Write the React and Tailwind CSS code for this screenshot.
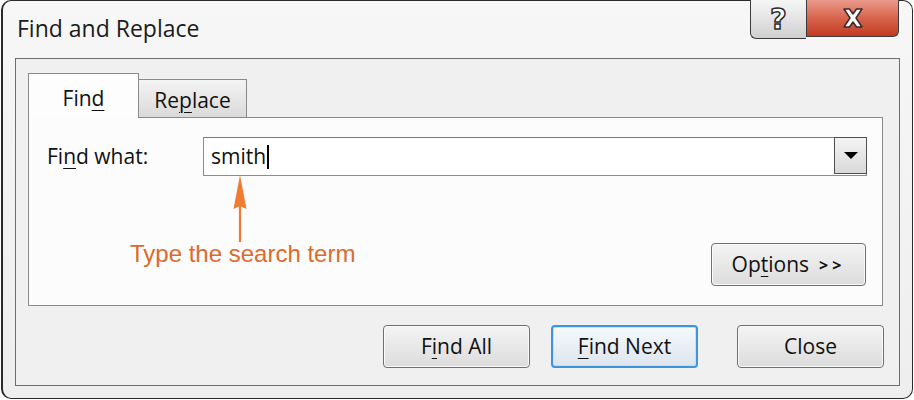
const ui = { fontFamily: '"Open Sans", "Noto Sans", sans-serif' };

function DialogButton({ children, primary = false }) {
  return (
    <button
      className={
        primary
          ? 'flex h-[43px] w-[147px] items-center justify-center rounded-[4px] border-2 border-[#3e95db] bg-gradient-to-b from-[#f5f9fc] to-[#dde5ec] text-[21px] text-[#111] shadow-[inset_0_0_0_1px_#bfe3fb]'
          : 'flex h-[43px] w-[147px] items-center justify-center rounded-[4px] border border-[#6f6f6f] bg-gradient-to-b from-[#f4f4f4] to-[#dcdcdc] text-[21px] text-[#111] shadow-[inset_0_0_0_1px_#fafafa]'
      }
      style={ui}
    >
      {children}
    </button>
  );
}

function U({ children }) {
  return <span className="underline decoration-1 underline-offset-[4px]">{children}</span>;
}

export default function App() {
  return (
    <div className="h-[400px] w-[914px] bg-white" style={ui}>
      <div className="ml-[1px] flex h-[399px] w-[912px] flex-col rounded-[10px] border border-l-2 border-[#2a2a2a] bg-gradient-to-b from-[#f7f7f7] to-[#eeeeee]">
        {/* title bar */}
        <div className="flex h-[57px] items-start justify-between pl-[14px] pr-[13px]">
          <h1 className="pt-[12px] text-[23px] leading-[30px] text-[#1b1b1b]">Find and Replace</h1>
          <div className="-mt-[1px] flex">
            <div className="flex h-[39px] w-[56px] items-center justify-center rounded-bl-[6px] border-b border-l border-[#3b3b3b] bg-gradient-to-b from-[#f6f6f6] via-[#e4e4e4] to-[#cfcfcf]">
              <span
                className="text-[29px] font-bold leading-none text-white [-webkit-text-stroke:1.5px_#2d2d2d]"
                style={{ fontFamily: '"DejaVu Sans", sans-serif' }}
              >
                ?
              </span>
            </div>
            <div className="flex h-[37px] w-[93px] items-center justify-center rounded-br-[6px] border-b border-l border-r border-[#3b3b3b] bg-gradient-to-b from-[#ea9a8b] via-[#d8644d] to-[#c23a22]">
              <svg width="24" height="22" viewBox="0 0 24 22">
                <path
                  d="M3 2 L8.5 2 L12 7 L15.5 2 L21 2 L15 11 L21 20 L15.5 20 L12 15 L8.5 20 L3 20 L9 11 Z"
                  fill="#fff"
                  stroke="#3a2a28"
                  strokeWidth="1.5"
                  strokeLinejoin="round"
                />
              </svg>
            </div>
          </div>
        </div>

        {/* client area */}
        <div className="ml-[12px] mr-[12px] flex h-[328px] flex-col border border-[#6d6d6d] bg-[#f0f0f0] pl-[12px] pt-[14px]">
          {/* tabs */}
          <div className="flex h-[44px] items-end">
            <div className="relative z-10 -mb-[1px] flex h-[45px] w-[111px] items-center justify-center border border-b-0 border-[#8a8a8a] bg-[#fdfdfd] pt-[5px] text-[21px] text-[#111]">
              Fin<U>d</U>
            </div>
            <div className="flex h-[38px] w-[108px] items-center justify-center border-r border-t border-[#8a8a8a] bg-gradient-to-b from-[#f4f4f4] to-[#dadada] pt-[4px] text-[21px] text-[#111]">
              Re<U>p</U>lace
            </div>
          </div>

          {/* tab panel */}
          <div className="relative flex h-[189px] w-[855px] flex-col border border-[#8a8a8a] bg-[#fcfcfc] pl-[18px] pr-[15px] pt-[19px]">
            <div className="flex items-center">
              <span className="w-[156px] text-[21px] text-[#111]">
                Fi<U>n</U>d what:
              </span>
              <div className="flex h-[39px] flex-1 items-stretch border border-[#8c8c8c] border-t-[#7a7a7a] bg-white">
                <div className="flex flex-1 items-center pl-[7px] text-[21px] text-[#111]">
                  smith
                  <span className="ml-[1px] h-[24px] w-[1.5px] bg-black" />
                </div>
                <div className="-my-[1px] -mr-[1px] mb-[1px] flex w-[33px] items-center justify-center border border-[#4f4f4f] bg-gradient-to-b from-[#f4f4f4] to-[#d9d9d9]">
                  <svg width="16" height="9" viewBox="0 0 16 9">
                    <path d="M1 1 L15 1 L8 8 Z" fill="#000" />
                  </svg>
                </div>
              </div>
            </div>

            <div className="mt-[67px] flex justify-end">
              <div className="mr-[1px] flex h-[43px] w-[155px] items-center justify-center rounded-[4px] border border-[#6f6f6f] bg-gradient-to-b from-[#f4f4f4] to-[#dcdcdc] text-[21px] text-[#111] shadow-[inset_0_0_0_1px_#fafafa]">
                Op<U>t</U>ions
                <span className="ml-[10px] text-[16px] font-bold tracking-[4px]">&gt;&gt;</span>
              </div>
            </div>

            {/* annotation */}
            <svg className="absolute left-[203px] top-[57px]" width="16" height="68" viewBox="0 0 16 68">
              <path d="M8 0 L14.5 34 L8 31 L1.5 34 Z" fill="#f07b31" />
              <line x1="8" y1="30" x2="8" y2="67" stroke="#f07b31" strokeWidth="2.2" />
            </svg>
            <span
              className="absolute left-[101px] top-[124px] text-[24px] leading-none text-[#dd6a2c]"
              style={{ fontFamily: '"Liberation Sans", Arial, sans-serif' }}
            >
              Type the search term
            </span>
          </div>

          {/* buttons */}
          <div className="mt-[19px] flex justify-end pr-[15px]">
            <DialogButton>
              F<U>i</U>nd All
            </DialogButton>
            <div className="w-[21px]" />
            <DialogButton primary>
              <U>F</U>ind Next
            </DialogButton>
            <div className="w-[39px]" />
            <DialogButton>Close</DialogButton>
          </div>
        </div>
      </div>
    </div>
  );
}
